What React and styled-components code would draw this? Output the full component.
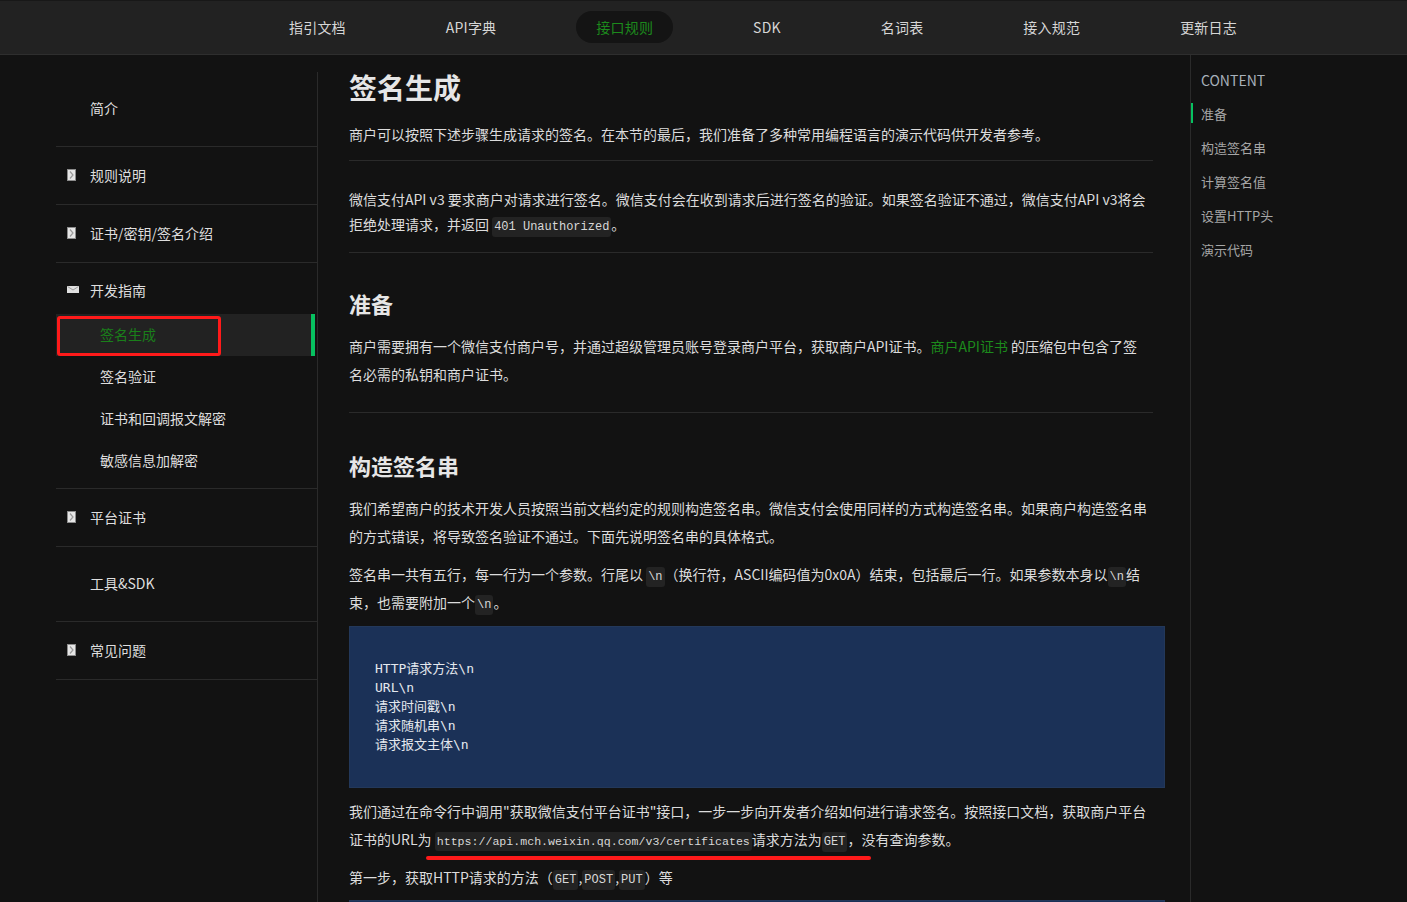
import React from 'react';
import styled, { createGlobalStyle, css } from 'styled-components';

const GlobalStyle = createGlobalStyle`
  html, body {
    margin: 0;
    padding: 0;
    background: #121212;
    overflow: hidden;
  }
  body {
    font-family: "Noto Sans CJK SC", "Noto Sans", sans-serif;
    color: #dcdcdc;
  }
  * { box-sizing: border-box; }
`;

const sans = `"Noto Sans CJK SC", "Noto Sans", sans-serif`;
const mono = `"Liberation Mono", "Noto Sans CJK SC", monospace`;

const TopNav = styled.nav`
  height: 55px;
  background: #222;
  border-top: 1px solid #181818;
  border-bottom: 1px solid #2e2e2e;
  display: flex;
  align-items: center;
  padding-left: 269px;
  padding-bottom: 1px;
  gap: 60px;
`;

const NavItem = styled.a`
  font-family: ${sans};
  font-size: 14px;
  line-height: 32px;
  height: 32px;
  padding: 0 20px;
  border-radius: 16px;
  color: #d6d6d6;
  text-decoration: none;
  white-space: nowrap;
  letter-spacing: 0.2px;
  ${p => p.$active && css`
    background: #141414;
    color: #1c8a1c;
  `}
`;

const Layout = styled.div`
  display: flex;
  align-items: stretch;
  min-height: calc(100vh - 55px);
`;

const Sidebar = styled.aside`
  width: 262px;
  flex-shrink: 0;
  margin: 17px 0 0 56px;
  border-right: 1px solid #2a2a2a;
`;

const Group = styled.div`
  border-bottom: 1px solid #2a2a2a;
  padding-bottom: ${p => p.$padBottom || 0}px;
`;

const GroupHead = styled.div`
  display: flex;
  align-items: center;
  height: ${p => p.$h}px;
  padding-top: ${p => p.$top || 0}px;
  padding-bottom: 2px;
  font-size: 14px;
  line-height: 20px;
  color: #dedede;
`;

const IconSlot = styled.span`
  width: 34px;
  display: flex;
  justify-content: flex-start;
  padding-left: 11px;
`;

const SubItem = styled.div`
  position: relative;
  height: 42px;
  display: flex;
  align-items: center;
  padding-left: 44px;
  padding-bottom: 2px;
  font-size: 14px;
  color: #dedede;
  margin-right: 2px;
  ${p => p.$active && css`
    background: #222;
    color: #1a7f1a;
    border-right: 4px solid #07c160;
  `}
`;

const RedBox = styled.span`
  position: absolute;
  left: 1px;
  top: 2px;
  width: 164px;
  height: 40px;
  border: 3px solid #ff1a1a;
  border-radius: 3px;
  pointer-events: none;
`;

const Main = styled.main`
  flex: 1;
  padding: 14px 41px 0 31px;
  min-width: 0;
`;

const Title = styled.h1`
  margin: 0 0 15px;
  font-size: 28px;
  line-height: 36px;
  font-weight: 700;
  color: #e6e6e6;
`;

const H2 = styled.h2`
  margin: ${p => p.$top}px 0 14px;
  font-size: 22px;
  line-height: 30px;
  font-weight: 700;
  color: #e6e6e6;
`;

const P = styled.p`
  margin: ${p => p.$top ?? 10}px 0 0;
  font-size: 14px;
  line-height: ${p => p.$lh || 28}px;
  color: #dcdcdc;
`;

const Rule = styled.hr`
  border: 0;
  height: 1px;
  background: #2a2a2a;
  margin: ${p => p.$top}px -4px ${p => p.$bottom}px 0;
`;

const Code = styled.code`
  font-family: ${mono};
  font-size: ${p => p.$size || 12}px;
  line-height: 1;
  background: #232323;
  border-radius: 3px;
  padding: 3px 2px;
  color: #d8d8d8;
`;

const Link = styled.a`
  color: #1c8a1c;
  text-decoration: none;
`;

const Marked = styled.span`
  position: relative;
  &::after {
    content: '';
    position: absolute;
    left: -9px;
    right: -10px;
    bottom: -11px;
    height: 4px;
    background: #ff1a1a;
    border-radius: 2px;
  }
`;

const CodeBlock = styled.pre`
  margin: ${p => p.$top}px -16px 0 0;
  padding: 32px 25px 33px;
  background: #1b3157;
  border: 1px solid #23385a;
  font-family: "DejaVu Sans Mono", "Noto Sans CJK SC", monospace;
  font-size: 13px;
  line-height: 19px;
  color: #e4e8ee;
  min-height: ${p => p.$minH || 0}px;
`;

const Toc = styled.aside`
  width: 217px;
  flex-shrink: 0;
  border-left: 1px solid #2a2a2a;
  padding-top: 15px;
`;

const TocTitle = styled.div`
  padding-left: 10px;
  font-family: ${sans};
  font-size: 14px;
  line-height: 20px;
  color: #a7b0ba;
  margin-bottom: 13px;
`;

const TocItem = styled.div`
  padding-left: 8px;
  height: 34px;
  display: flex;
  align-items: center;
  font-size: 13px;
  color: #a6a6a6;
  border-left: 2px solid transparent;
  ${p => p.$active && css`
    border-left-color: #07c160;
    height: 20px;
    margin: 7px 0;
  `}
`;

const ArrowRight = () => (
  <svg width="9" height="12" viewBox="0 0 9 12">
    <rect x="0.5" y="0.5" width="8" height="11" fill="#e6e6e6" stroke="#8c8c8c" />
    <path d="M3 2.5 L6 6 L3 9.5" fill="none" stroke="#9a9a9a" strokeWidth="1.2" />
  </svg>
);

const ArrowDown = () => (
  <svg width="12" height="7" viewBox="0 0 12 7">
    <path d="M0 0 H12 V7 H0 Z" fill="#e0e0e0" />
    <path d="M0.5 0.5 L6 4 L11.5 0.5" fill="none" stroke="#9a9a9a" strokeWidth="1" />
  </svg>
);

const navItems = ['指引文档', 'API字典', '接口规则', 'SDK', '名词表', '接入规范', '更新日志'];
const tocItems = ['准备', '构造签名串', '计算签名值', '设置HTTP头', '演示代码'];
const subItems = ['签名生成', '签名验证', '证书和回调报文解密', '敏感信息加解密'];

export default function App() {
  return (
    <>
      <GlobalStyle />
      <TopNav>
        {navItems.map(n => (
          <NavItem key={n} $active={n === '接口规则'}>{n}</NavItem>
        ))}
      </TopNav>
      <Layout>
        <Sidebar>
          <Group>
            <GroupHead $h={74}><IconSlot /> 简介</GroupHead>
          </Group>
          <Group>
            <GroupHead $h={57}><IconSlot><ArrowRight /></IconSlot>规则说明</GroupHead>
          </Group>
          <Group>
            <GroupHead $h={57}><IconSlot><ArrowRight /></IconSlot>证书/密钥/签名介绍</GroupHead>
          </Group>
          <Group $padBottom={6}>
            <GroupHead $h={51} $top={4}><IconSlot><ArrowDown /></IconSlot>开发指南</GroupHead>
            {subItems.map((s, i) => (
              <SubItem key={s} $active={i === 0}>
                {s}
                {i === 0 && <RedBox />}
              </SubItem>
            ))}
          </Group>
          <Group>
            <GroupHead $h={57}><IconSlot><ArrowRight /></IconSlot>平台证书</GroupHead>
          </Group>
          <Group>
            <GroupHead $h={74}><IconSlot />工具&amp;SDK</GroupHead>
          </Group>
          <Group>
            <GroupHead $h={57}><IconSlot><ArrowRight /></IconSlot>常见问题</GroupHead>
          </Group>
        </Sidebar>

        <Main>
          <Title>签名生成</Title>
          <P $top={0}>商户可以按照下述步骤生成请求的签名。在本节的最后，我们准备了多种常用编程语言的演示代码供开发者参考。</P>
          <Rule $top={12} $bottom={26} />
          <P $top={0} $lh={25}>
            微信支付API v3 要求商户对请求进行签名。微信支付会在收到请求后进行签名的验证。如果签名验证不通过，微信支付API v3将会拒绝处理请求，并返回 <Code>401 Unauthorized</Code>。
          </P>
          <Rule $top={15} $bottom={0} />
          <H2 $top={35}>准备</H2>
          <P $top={0}>
            商户需要拥有一个微信支付商户号，并通过超级管理员账号登录商户平台，获取商户API证书。<Link>商户API证书</Link> 的压缩包中包含了签名必需的私钥和商户证书。
          </P>
          <Rule $top={24} $bottom={0} />
          <H2 $top={37}>构造签名串</H2>
          <P $top={0}>
            我们希望商户的技术开发人员按照当前文档约定的规则构造签名串。微信支付会使用同样的方式构造签名串。如果商户构造签名串的方式错误，将导致签名验证不通过。下面先说明签名串的具体格式。
          </P>
          <P>
            签名串一共有五行，每一行为一个参数。行尾以 <Code>\n</Code>（换行符，ASCII编码值为0x0A）结束，包括最后一行。如果参数本身以<Code>\n</Code>结束，也需要附加一个<Code>\n</Code>。
          </P>
          <CodeBlock $top={10}>{'HTTP请求方法\\n\nURL\\n\n请求时间戳\\n\n请求随机串\\n\n请求报文主体\\n'}</CodeBlock>
          <P $top={9}>
            我们通过在命令行中调用"获取微信支付平台证书"接口，一步一步向开发者介绍如何进行请求签名。按照接口文档，获取商户平台证书的URL为 <Marked><Code $size={11.6}>https://api.mch.weixin.qq.com/v3/certificates</Code>请求方法为<Code>GET</Code>，</Marked>没有查询参数。
          </P>
          <P>
            第一步，获取HTTP请求的方法（<Code>GET</Code>,<Code>POST</Code>,<Code>PUT</Code>）等
          </P>
          <CodeBlock $top={9} $minH={120}>{'GET'}</CodeBlock>
        </Main>

        <Toc>
          <TocTitle>CONTENT</TocTitle>
          {tocItems.map((t, i) => (
            <TocItem key={t} $active={i === 0}>{t}</TocItem>
          ))}
        </Toc>
      </Layout>
    </>
  );
}
